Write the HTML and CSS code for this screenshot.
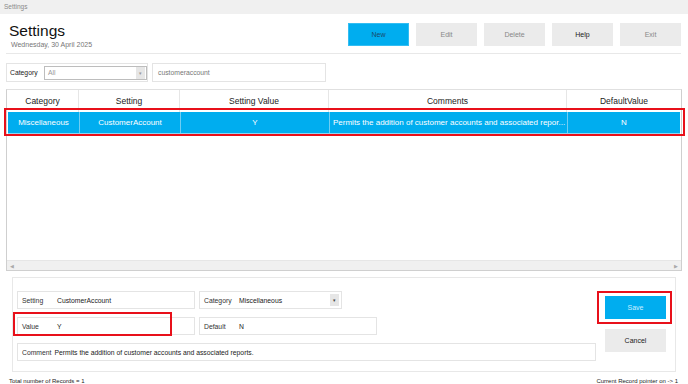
FILE: index.html
```html
<!DOCTYPE html>
<html lang="en">
<head>
  <meta charset="UTF-8" />
  <title>Settings</title>
  <link rel="stylesheet" href="styles.css">
</head>
<body>
  <div class="titlebar">Settings</div>

  <div class="header">
    <div class="title-block">
      <h1>Settings</h1>
      <div class="date">Wednesday, 30 April 2025</div>
    </div>
    <div class="toolbar">
      <button class="btn btn-primary">New</button>
      <button class="btn btn-muted">Edit</button>
      <button class="btn btn-muted">Delete</button>
      <button class="btn btn-dark">Help</button>
      <button class="btn btn-muted">Exit</button>
    </div>
  </div>

  <div class="filter-row">
    <div class="filter-box">
      <span class="filter-label">Category</span>
      <div class="combo">
        <span class="combo-text">All</span>
        <span class="combo-arrow">&#9662;</span>
      </div>
    </div>
    <div class="search-box">customeraccount</div>
  </div>

  <div class="grid">
    <div class="grid-row grid-head">
      <div class="cell c1">Category</div>
      <div class="cell c2">Setting</div>
      <div class="cell c3">Setting Value</div>
      <div class="cell c4">Comments</div>
      <div class="cell c5">DefaultValue</div>
    </div>
    <div class="grid-row grid-selected">
      <div class="cell c1">Miscellaneous</div>
      <div class="cell c2">CustomerAccount</div>
      <div class="cell c3">Y</div>
      <div class="cell c4 left">Permits the addition of customer accounts and associated repor...</div>
      <div class="cell c5">N</div>
    </div>
    <div class="grid-body"></div>
    <div class="hscroll">
      <span class="arrow">&#9664;</span>
      <span class="arrow">&#9654;</span>
    </div>
  </div>

  <div class="edit-panel">
    <div class="fields">
      <div class="field-line">
        <div class="field w-setting"><span class="flabel">Setting</span><span>CustomerAccount</span></div>
        <div class="field w-category">
          <span class="flabel">Category</span><span class="grow">Miscellaneous</span>
          <span class="mini-arrow">&#9662;</span>
        </div>
      </div>
      <div class="field-line">
        <div class="field w-setting"><span class="flabel">Value</span><span>Y</span></div>
        <div class="field w-default"><span class="flabel">Default</span><span>N</span></div>
      </div>
      <div class="field-line">
        <div class="field w-comment"><span class="flabel-short">Comment</span><span>Permits the addition of customer accounts and associated reports.</span></div>
      </div>
    </div>
    <div class="actions">
      <button class="btn btn-save">Save</button>
      <button class="btn btn-cancel">Cancel</button>
    </div>
  </div>

  <div class="footer">
    <span>Total number of Records = 1</span>
    <span>Current Record pointer on -&gt; 1</span>
  </div>

  <!-- red annotation boxes drawn over the screenshot -->
  <div class="mark mark-row"></div>
  <div class="mark mark-value"></div>
  <div class="mark mark-save"></div>
</body>
</html>
```

FILE: styles.css
```css
* {
  box-sizing: border-box;
}

body {
  margin: 0;
  width: 688px;
  height: 384px;
  overflow: hidden;
  font-family: "Liberation Sans", Arial, sans-serif;
  font-size: 6.8px;
  color: #333;
  background: #fff;
  position: relative;
}

.titlebar {
  height: 14px;
  line-height: 13px;
  padding-left: 4px;
  background: #f0f0f0;
  color: #8a8a8a;
  font-size: 6.5px;
}

.header {
  display: flex;
  justify-content: space-between;
  margin: 0 7px 0 6px;
  height: 40px;
  border-bottom: 1px solid #e8e8e8;
}

.title-block {
  padding: 8px 0 0 3px;
}

h1 {
  margin: 0;
  font-size: 15.5px;
  font-weight: normal;
  line-height: 18px;
  color: #111;
}

.date {
  margin-left: 2px;
  font-size: 7px;
  line-height: 10px;
  color: #777;
}

.toolbar {
  display: flex;
  gap: 7px;
  padding-top: 9px;
}

.btn {
  width: 61px;
  height: 23px;
  border: none;
  padding: 0;
  font-family: "Liberation Sans", Arial, sans-serif;
  font-size: 7px;
  background: #ebebeb;
  color: #888;
}

.btn-primary {
  background: #00adef;
  border: 1px solid #33bdf2;
  color: #1a4a6a;
}

.btn-dark {
  color: #222;
}

.filter-row {
  display: flex;
  gap: 4px;
  margin: 9px 0 0 6px;
  height: 19px;
}

.filter-box {
  display: flex;
  align-items: center;
  width: 142px;
  border: 1px solid #e4e4e4;
  padding-left: 3px;
}

.filter-label {
  width: 34px;
  color: #222;
}

.combo {
  display: flex;
  align-items: center;
  width: 103px;
  height: 14px;
  border: 1px solid #bdbdbd;
  padding-left: 3px;
  color: #999;
}

.combo-text {
  flex: 1;
}

.combo-arrow {
  width: 9px;
  height: 12px;
  line-height: 12px;
  margin-right: 1px;
  text-align: center;
  background: #e6e6e6;
  font-size: 5px;
  color: #999;
}

.search-box {
  width: 174px;
  border: 1px solid #e4e4e4;
  line-height: 17px;
  padding-left: 5px;
  color: #777;
}

.grid {
  display: flex;
  flex-direction: column;
  margin: 7px 0 0 6px;
  width: 676px;
  height: 182px;
  border: 1px solid #cfcfcf;
  border-top-color: #e0e0e0;
}

.grid-row {
  display: flex;
  height: 22px;
}

.cell {
  display: flex;
  align-items: center;
  justify-content: center;
  white-space: nowrap;
  overflow: hidden;
  font-size: 8px;
  border-right: 1px solid #e6e6e6;
}

.cell.left {
  justify-content: flex-start;
  padding-left: 3px;
}

.c1 { width: 72px; }
.c2 { width: 101px; }
.c3 { width: 149px; }
.c4 { width: 238px; }
.c5 { flex: 1; border-right: none; }

.grid-head .cell {
  font-size: 8.5px;
  color: #222;
}

.grid-selected {
  margin: 0 1px;
  background: #00adef;
  border-bottom: 1px solid #8ad6f5;
}

.grid-selected .cell {
  color: #fff;
  border-right-color: #6fcdf3;
}

.grid-selected .c5 {
  border-right: none;
}

.grid-body {
  flex: 1;
}

.hscroll {
  display: flex;
  justify-content: space-between;
  align-items: center;
  height: 10px;
  padding: 0 3px;
  background: #f0f0f0;
  border-top: 1px solid #e6e6e6;
}

.arrow {
  font-size: 5px;
  color: #aaa;
}

.edit-panel {
  display: flex;
  margin: 6px 0 0 12px;
  width: 664px;
  height: 95px;
  border: 1px solid #e8e8e8;
  padding: 13px 10px 0 4px;
}

.fields {
  display: flex;
  flex-direction: column;
  gap: 8px;
  width: 579px;
}

.field-line {
  display: flex;
  gap: 4px;
}

.field {
  display: flex;
  align-items: center;
  height: 18px;
  border: 1px solid #e4e4e4;
  padding-left: 4px;
  white-space: nowrap;
  color: #222;
}

.flabel {
  width: 35px;
  color: #333;
}

.flabel-short {
  margin-right: 3px;
  color: #333;
}

.grow {
  flex: 1;
}

.mini-arrow {
  width: 9px;
  height: 12px;
  line-height: 12px;
  margin-right: 2px;
  text-align: center;
  background: #e6e6e6;
  font-size: 5px;
  color: #444;
}

.w-setting { width: 178px; }
.w-category { width: 143px; }
.w-default { width: 178px; }
.w-comment { width: 579px; }

.actions {
  display: flex;
  flex-direction: column;
  gap: 10px;
  margin-left: 9px;
  padding-top: 5px;
}

.btn-save {
  background: #00adef;
  color: #cdeeff;
}

.btn-cancel {
  color: #222;
}

.footer {
  display: flex;
  justify-content: space-between;
  margin: 5px 10px 0 9px;
  font-size: 6px;
  line-height: 8px;
  color: #222;
}

.mark {
  position: absolute;
  border: 2px solid #e8101a;
}

.mark-row {
  left: 4px;
  top: 108px;
  width: 681px;
  height: 28px;
}

.mark-value {
  left: 13px;
  top: 312px;
  width: 159px;
  height: 24px;
}

.mark-save {
  left: 597px;
  top: 291px;
  width: 75px;
  height: 33px;
}
```
